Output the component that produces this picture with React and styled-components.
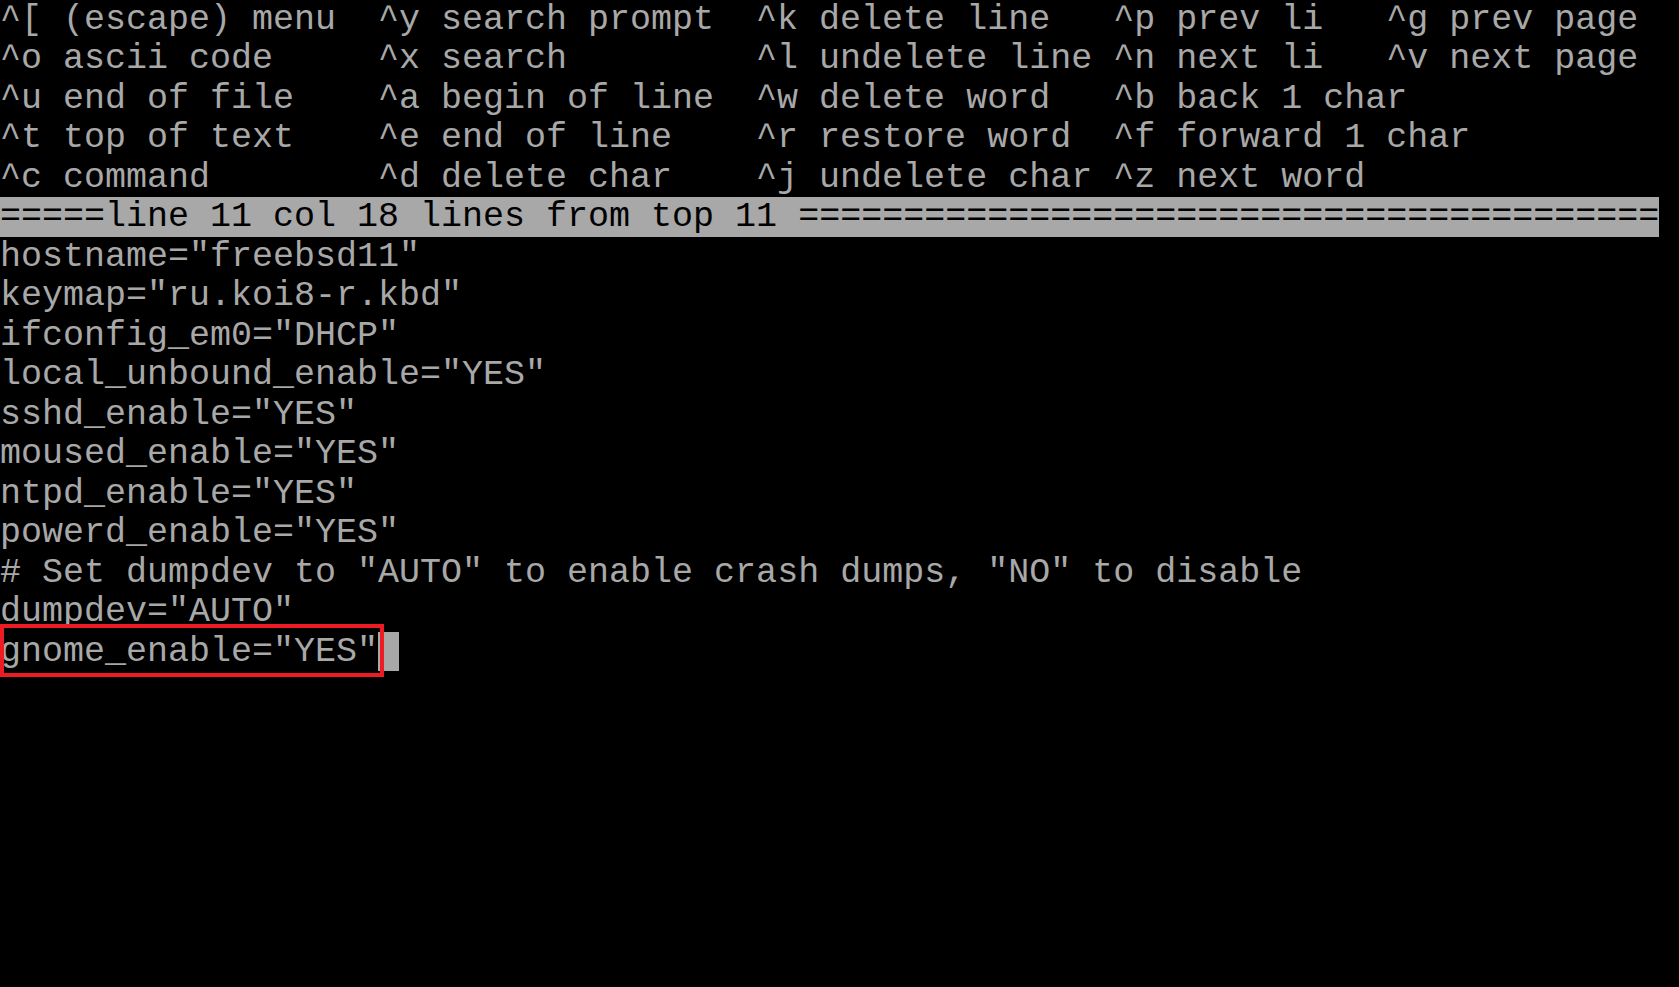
import React from 'react';
import styled, { createGlobalStyle } from 'styled-components';

const GlobalStyle = createGlobalStyle`
  html, body {
    margin: 0;
    padding: 0;
    background: #000;
  }
`;

const ROW_H = 987 / 25;

const Screen = styled.div`
  width: 1679px;
  height: 987px;
  background: #000;
  color: #a8a8a8;
  font-family: 'Liberation Mono', 'DejaVu Sans Mono', monospace;
  font-size: 35px;
  overflow: hidden;
  display: flex;
  flex-direction: column;
`;

const Line = styled.div`
  position: relative;
  box-sizing: border-box;
  height: ${ROW_H}px;
  padding-top: 2px;
  line-height: ${ROW_H - 2}px;
  white-space: pre;
  flex: none;
`;

const MenuRow = styled(Line)`
  display: grid;
  grid-template-columns: 18ch 18ch 17ch 13ch 1fr;
`;

const StatusBar = styled(Line)`
  width: 79ch;
  background: #a8a8a8;
  color: #000;
`;

const Cursor = styled.span`
  display: inline-block;
  width: 1ch;
  height: ${ROW_H}px;
  margin-top: -2px;
  vertical-align: top;
  background: #a8a8a8;
`;

const Highlight = styled.div`
  position: absolute;
  left: 0;
  top: -8px;
  width: 384px;
  height: 53px;
  box-sizing: border-box;
  border: 4px solid #ed1c24;
  pointer-events: none;
`;

const menu = [
  ['^[ (escape) menu', '^y search prompt', '^k delete line', '^p prev li', '^g prev page'],
  ['^o ascii code', '^x search', '^l undelete line', '^n next li', '^v next page'],
  ['^u end of file', '^a begin of line', '^w delete word', '^b back 1 char', ''],
  ['^t top of text', '^e end of line', '^r restore word', '^f forward 1 char', ''],
  ['^c command', '^d delete char', '^j undelete char', '^z next word', ''],
];

const fileLines = [
  'hostname="freebsd11"',
  'keymap="ru.koi8-r.kbd"',
  'ifconfig_em0="DHCP"',
  'local_unbound_enable="YES"',
  'sshd_enable="YES"',
  'moused_enable="YES"',
  'ntpd_enable="YES"',
  'powerd_enable="YES"',
  '# Set dumpdev to "AUTO" to enable crash dumps, "NO" to disable',
  'dumpdev="AUTO"',
];

const statusText = '=====line 11 col 18 lines from top 11 ';

export default function App() {
  const emptyRows = 25 - menu.length - 1 - fileLines.length - 1;
  return (
    <>
      <GlobalStyle />
      <Screen>
        {menu.map((row, i) => (
          <MenuRow key={i}>
            {row.map((cell, j) => (
              <span key={j}>{cell}</span>
            ))}
          </MenuRow>
        ))}
        <StatusBar>{statusText + '='.repeat(79 - statusText.length)}</StatusBar>
        {fileLines.map((l, i) => (
          <Line key={i}>{l}</Line>
        ))}
        <Line>
          gnome_enable="YES"<Cursor />
          <Highlight />
        </Line>
        {Array.from({ length: emptyRows }).map((_, i) => (
          <Line key={`e${i}`} />
        ))}
      </Screen>
    </>
  );
}
